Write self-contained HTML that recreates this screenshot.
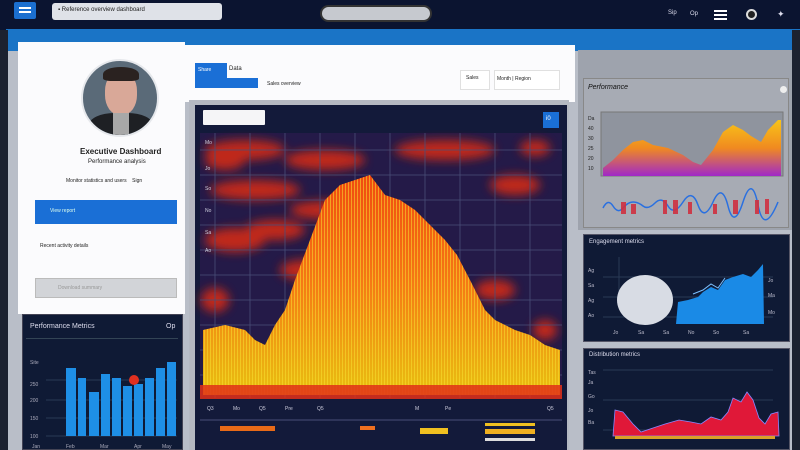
<!DOCTYPE html>
<html><head><meta charset="utf-8"><style>
*{margin:0;padding:0;box-sizing:border-box}
body{width:800px;height:450px;overflow:hidden;background:#b9bec8;font-family:"Liberation Sans",sans-serif;position:relative}
.a{position:absolute}
.t{font-size:7px;color:#222;white-space:nowrap}
.w{color:#dde}
</style></head><body>
<div class="a" style="left:0;top:0;width:800px;height:30px;background:#0b1430"></div>
<div class="a" style="left:14px;top:2px;width:22px;height:17px;background:#1b6fd0;border-radius:2px"></div>
<div class="a" style="left:19px;top:7px;width:12px;height:2px;background:#fff"></div>
<div class="a" style="left:19px;top:11px;width:12px;height:2px;background:#fff"></div>
<div class="a" style="left:52px;top:3px;width:170px;height:17px;background:#dfe2e8;border-radius:3px"></div>
<div class="a t" style="left:58px;top:7px;font-size:6px">&#9642; Reference overview dashboard</div>
<div class="a" style="left:320px;top:5px;width:112px;height:17px;background:#c6c9cf;border-radius:9px;border:2px solid #333"></div>
<div class="a t w" style="left:668px;top:10px;font-size:6px">Sip</div>
<div class="a t w" style="left:690px;top:11px;font-size:6px">Op</div>
<div class="a" style="left:714px;top:10px;width:13px;height:2px;background:#fff;box-shadow:0 4px 0 #fff,0 8px 0 #fff"></div>
<div class="a" style="left:746px;top:9px;width:11px;height:11px;border-radius:50%;background:#222;border:2px solid #ddd"></div>
<div class="a t w" style="left:777px;top:9px;font-size:9px">&#10022;</div>
<div class="a" style="left:6px;top:29px;width:794px;height:22px;background:#1a74c6"></div>
<div class="a" style="left:0;top:30px;width:8px;height:420px;background:#1c2230"></div>
<div class="a" style="left:18px;top:42px;width:167px;height:272px;background:#fbfbfd"></div>
<div class="a" style="left:81px;top:59px;width:78px;height:78px;border-radius:50%;background:#5a6a78;border:2px solid #e6e8ec;overflow:hidden">
 <div class="a" style="left:22px;top:10px;width:32px;height:44px;border-radius:45%;background:#d9a898"></div>
 <div class="a" style="left:20px;top:6px;width:36px;height:14px;border-radius:50% 50% 20% 20%;background:#2a2220"></div>
 <div class="a" style="left:6px;top:52px;width:64px;height:30px;border-radius:40% 40% 0 0;background:#1e2024"></div>
 <div class="a" style="left:30px;top:52px;width:16px;height:24px;background:#a8a8a8"></div>
</div>
<div class="a t" style="left:80px;top:147px;font-size:8px;font-weight:bold">Executive Dashboard</div>
<div class="a t" style="left:88px;top:159px;font-size:6px">Performance analysis</div>
<div class="a t" style="left:66px;top:178px;font-size:5px">Monitor statistics and users &nbsp;&nbsp; Sign</div>
<div class="a" style="left:35px;top:200px;width:142px;height:24px;background:#1a6fd6"></div>
<div class="a t" style="left:50px;top:208px;font-size:5px;color:#dfe">View report</div>
<div class="a t" style="left:40px;top:243px;font-size:5px">Recent activity details</div>
<div class="a" style="left:35px;top:278px;width:142px;height:20px;background:#d2d4d8;border:1px solid #bbb"></div>
<div class="a t" style="left:58px;top:285px;font-size:5px;color:#999">Download summary</div>
<div class="a" style="left:22px;top:314px;width:161px;height:136px;background:#0f1a35;border:1px solid #445"></div>
<div class="a t w" style="left:30px;top:323px;font-size:7px">Performance Metrics</div>
<div class="a t w" style="left:166px;top:323px;font-size:7px">Op</div>
<div class="a" style="left:26px;top:338px;width:152px;height:1px;background:#345"></div>
<svg class="a" style="left:22px;top:340px" width="161" height="110">
 <g stroke="#2a3a55" stroke-width="1"><line x1="24" y1="40" x2="155" y2="40"/><line x1="24" y1="60" x2="155" y2="60"/><line x1="24" y1="78" x2="155" y2="78"/><line x1="24" y1="96" x2="155" y2="96"/></g>
 <g fill="#1e8fe6"><rect x="44" y="28" width="10" height="68"/><rect x="56" y="38" width="8" height="58"/><rect x="67" y="52" width="10" height="44"/><rect x="79" y="34" width="9" height="62"/><rect x="90" y="38" width="9" height="58"/><rect x="101" y="46" width="9" height="50"/><rect x="112" y="44" width="9" height="52"/><rect x="123" y="38" width="9" height="58"/><rect x="134" y="28" width="9" height="68"/><rect x="145" y="22" width="9" height="74"/></g>
 <circle cx="112" cy="40" r="5" fill="#e03020"/>
 <g fill="#aab" font-size="5" font-family="Liberation Sans"><text x="8" y="24">Site</text><text x="8" y="46">250</text><text x="8" y="62">200</text><text x="8" y="80">150</text><text x="8" y="98">100</text><text x="10" y="108">Jan</text><text x="44" y="108">Feb</text><text x="78" y="108">Mar</text><text x="112" y="108">Apr</text><text x="140" y="108">May</text></g>
</svg>
<div class="a" style="left:185px;top:45px;width:390px;height:57px;background:#fbfbfd"></div>
<div class="a" style="left:195px;top:63px;width:32px;height:15px;background:#1a6fd6"></div>
<div class="a" style="left:195px;top:78px;width:63px;height:10px;background:#1a6fd6"></div>
<div class="a t" style="left:198px;top:67px;font-size:5px;color:#fff">Share</div>
<div class="a t" style="left:229px;top:66px;font-size:6px">Data</div>
<div class="a t" style="left:267px;top:81px;font-size:5px">Sales overview</div>
<div class="a" style="left:460px;top:70px;width:30px;height:20px;border:1px solid #e0e0e0;background:#fff"></div>
<div class="a t" style="left:466px;top:75px;font-size:5px">Sales</div>
<div class="a" style="left:494px;top:70px;width:66px;height:20px;border:1px solid #e0e0e0;background:#fff"></div>
<div class="a t" style="left:497px;top:76px;font-size:5px">Month | Region</div>
<div class="a" style="left:189px;top:100px;width:380px;height:350px;background:#b5b9c2"></div>
<div class="a" style="left:195px;top:105px;width:372px;height:345px;background:#131a3a"></div>
<div class="a" style="left:203px;top:110px;width:62px;height:15px;background:#f5f5f7;border-radius:1px"></div>
<div class="a" style="left:543px;top:112px;width:16px;height:16px;background:#1a6fd6"></div>
<div class="a t" style="left:546px;top:116px;font-size:6px;color:#fff">i0</div>
<svg class="a" style="left:195px;top:130px" width="372" height="320">
 <defs>
  <filter id="bl"><feGaussianBlur stdDeviation="5"/></filter>
  <linearGradient id="mt" x1="0" y1="0" x2="0" y2="1"><stop offset="0" stop-color="#f04a10"/><stop offset="0.5" stop-color="#f57a14"/><stop offset="1" stop-color="#e8c010"/></linearGradient>
  <pattern id="st" width="3" height="10" patternUnits="userSpaceOnUse"><rect width="1" height="10" fill="#f8e030" opacity="0.55"/></pattern>
 </defs>
 <rect x="5" y="3" width="362" height="265" fill="#241a48"/>
 <g filter="url(#bl)" fill="#d02a18" opacity="0.9">
  <ellipse cx="50" cy="20" rx="40" ry="10"/><ellipse cx="130" cy="30" rx="40" ry="10"/><ellipse cx="60" cy="60" rx="45" ry="10"/><ellipse cx="130" cy="80" rx="35" ry="9"/><ellipse cx="40" cy="110" rx="30" ry="12"/><ellipse cx="110" cy="140" rx="25" ry="10"/><ellipse cx="250" cy="20" rx="50" ry="10"/><ellipse cx="320" cy="55" rx="25" ry="10"/><ellipse cx="340" cy="18" rx="15" ry="8"/><ellipse cx="300" cy="160" rx="20" ry="10"/><ellipse cx="350" cy="200" rx="12" ry="10"/><ellipse cx="20" cy="170" rx="14" ry="12"/><ellipse cx="80" cy="100" rx="30" ry="10"/><ellipse cx="30" cy="30" rx="20" ry="10"/>
 </g>
 <g stroke="#4a4f78" stroke-width="0.8">
  <line x1="20" y1="3" x2="20" y2="268"/><line x1="55" y1="3" x2="55" y2="268"/><line x1="90" y1="3" x2="90" y2="268"/><line x1="125" y1="3" x2="125" y2="268"/><line x1="160" y1="3" x2="160" y2="268"/><line x1="195" y1="3" x2="195" y2="268"/><line x1="230" y1="3" x2="230" y2="268"/><line x1="265" y1="3" x2="265" y2="268"/><line x1="300" y1="3" x2="300" y2="268"/><line x1="335" y1="3" x2="335" y2="268"/>
  <line x1="5" y1="20" x2="367" y2="20"/><line x1="5" y1="45" x2="367" y2="45"/><line x1="5" y1="70" x2="367" y2="70"/><line x1="5" y1="95" x2="367" y2="95"/><line x1="5" y1="120" x2="367" y2="120"/><line x1="5" y1="145" x2="367" y2="145"/><line x1="5" y1="170" x2="367" y2="170"/><line x1="5" y1="195" x2="367" y2="195"/><line x1="5" y1="220" x2="367" y2="220"/><line x1="5" y1="245" x2="367" y2="245"/>
 </g>
 <path d="M8 200 L30 195 L50 200 L60 210 L70 215 L80 195 L90 180 L100 150 L115 110 L130 70 L145 55 L160 50 L175 45 L190 65 L205 70 L220 80 L235 95 L250 110 L262 125 L275 150 L290 180 L300 190 L320 200 L335 205 L350 215 L365 220 L365 265 L8 265 Z" fill="url(#mt)"/>
 <path d="M8 200 L30 195 L50 200 L60 210 L70 215 L80 195 L90 180 L100 150 L115 110 L130 70 L145 55 L160 50 L175 45 L190 65 L205 70 L220 80 L235 95 L250 110 L262 125 L275 150 L290 180 L300 190 L320 200 L335 205 L350 215 L365 220 L365 265 L8 265 Z" fill="url(#st)"/>
 <rect x="5" y="255" width="362" height="14" fill="#e03018" opacity="0.85"/>
 <g fill="#ccd" font-size="5" font-family="Liberation Sans"><text x="10" y="14">Mo</text><text x="10" y="40">Jo</text><text x="10" y="60">So</text><text x="10" y="82">No</text><text x="10" y="104">Sa</text><text x="10" y="122">Ao</text><text x="12" y="280">Q3</text><text x="38" y="280">Mo</text><text x="64" y="280">Q5</text><text x="90" y="280">Pre</text><text x="122" y="280">Q5</text><text x="220" y="280">M</text><text x="250" y="280">Pe</text><text x="352" y="280">Q5</text></g>
 <line x1="5" y1="290" x2="367" y2="290" stroke="#4a4f78"/>
 <rect x="25" y="296" width="55" height="5" fill="#e86a18"/>
 <rect x="225" y="298" width="28" height="6" fill="#f0c020"/>
 <rect x="290" y="293" width="50" height="3" fill="#f0c020"/>
 <rect x="290" y="299" width="50" height="5" fill="#f0b020"/>
 <rect x="290" y="308" width="50" height="3" fill="#ddd"/>
 <rect x="165" y="296" width="15" height="4" fill="#f07020"/>
</svg>
<div class="a" style="left:578px;top:50px;width:216px;height:180px;background:#9ea3ad"></div>
<div class="a" style="left:583px;top:78px;width:206px;height:150px;background:#a7abb4;border:1px solid #888"></div>
<div class="a t" style="left:588px;top:84px;font-size:7px;font-style:italic;color:#111">Performance</div>
<div class="a" style="left:780px;top:86px;width:7px;height:7px;border-radius:50%;background:#eee"></div>
<svg class="a" style="left:583px;top:100px" width="206" height="128">
 <defs><linearGradient id="ar" x1="0" y1="0" x2="0" y2="1"><stop offset="0" stop-color="#f8c418"/><stop offset="0.5" stop-color="#f08a20"/><stop offset="1" stop-color="#a028c8"/></linearGradient></defs>
 <rect x="18" y="12" width="182" height="64" fill="#8f949e" stroke="#777"/>
 <path d="M20 68 L30 60 L40 50 L50 42 L60 40 L70 45 L85 48 L100 55 L110 62 L118 65 L130 50 L140 32 L150 25 L160 30 L168 36 L178 42 L185 30 L195 20 L198 20 L198 76 L20 76 Z" fill="url(#ar)"/>
 <g fill="#222" font-size="5" font-family="Liberation Sans"><text x="5" y="20">Da</text><text x="5" y="30">40</text><text x="5" y="40">30</text><text x="5" y="50">25</text><text x="5" y="60">20</text><text x="5" y="70">10</text></g>
 <path d="M20 108 Q25 98 30 106 T40 108 T50 102 T60 106 T72 103 T85 106 T100 102 T115 105 T130 102 T145 106 T160 102 T175 105 T195 102" stroke="#2a70e0" stroke-width="1.5" fill="none"/>
 <g fill="#d03040" opacity="0.9"><rect x="38" y="102" width="5" height="12"/><rect x="48" y="104" width="5" height="10"/><rect x="80" y="100" width="4" height="14"/><rect x="90" y="100" width="5" height="14"/><rect x="105" y="102" width="4" height="12"/><rect x="130" y="104" width="4" height="10"/><rect x="150" y="100" width="5" height="14"/><rect x="172" y="100" width="4" height="14"/><rect x="182" y="99" width="4" height="15"/></g>
</svg>
<div class="a" style="left:583px;top:234px;width:207px;height:108px;background:#0f1a35;border:1px solid #556"></div>
<div class="a t w" style="left:589px;top:239px;font-size:6px">Engagement metrics</div>
<svg class="a" style="left:583px;top:252px" width="207" height="90">
 <g stroke="#2a3a55"><line x1="20" y1="25" x2="190" y2="25"/><line x1="20" y1="45" x2="190" y2="45"/><line x1="20" y1="65" x2="190" y2="65"/><line x1="36" y1="5" x2="36" y2="50"/></g>
 <ellipse cx="62" cy="48" rx="28" ry="25" fill="#d8dce4"/>
 <path d="M93 72 L95 50 L105 48 L115 45 L120 40 L128 35 L135 38 L142 28 L150 25 L160 22 L168 25 L175 18 L180 12 L181 72 Z" fill="#1a8ae6"/>
 <path d="M110 42 L120 38 L128 32 L135 36 L142 26" stroke="#7cc0ff" fill="none"/>
 <g fill="#bbc" font-size="5" font-family="Liberation Sans"><text x="5" y="20">Ag</text><text x="5" y="35">Sa</text><text x="5" y="50">Ag</text><text x="5" y="65">Ao</text><text x="30" y="82">Jo</text><text x="55" y="82">Sa</text><text x="80" y="82">Sa</text><text x="105" y="82">No</text><text x="130" y="82">So</text><text x="160" y="82">Sa</text><text x="185" y="30">Jo</text><text x="185" y="45">Ma</text><text x="185" y="62">Mo</text></g>
</svg>
<div class="a" style="left:583px;top:348px;width:207px;height:102px;background:#0f1a35;border:1px solid #556"></div>
<div class="a t w" style="left:589px;top:352px;font-size:6px">Distribution metrics</div>
<svg class="a" style="left:583px;top:362px" width="207" height="88">
 <g stroke="#2a3a55"><line x1="20" y1="8" x2="190" y2="8"/><line x1="20" y1="38" x2="190" y2="38"/><line x1="20" y1="68" x2="190" y2="68"/></g>
 <path d="M30 74 L32 48 L40 50 L50 62 L58 70 L70 66 L82 62 L96 58 L108 60 L118 62 L128 55 L138 58 L145 50 L150 36 L158 40 L164 30 L170 38 L176 56 L182 62 L188 52 L195 50 L196 74 Z" fill="#e01838" stroke="#8888ff" stroke-width="0.8"/>
 <rect x="32" y="74" width="160" height="3" fill="#d8a028"/>
 <g fill="#bbc" font-size="5" font-family="Liberation Sans"><text x="5" y="12">Tas</text><text x="5" y="22">Ja</text><text x="5" y="36">Go</text><text x="5" y="50">Jo</text><text x="5" y="62">Ba</text></g>
</svg>
<div class="a" style="left:792px;top:30px;width:8px;height:420px;background:#1c2230"></div>
</body></html>
